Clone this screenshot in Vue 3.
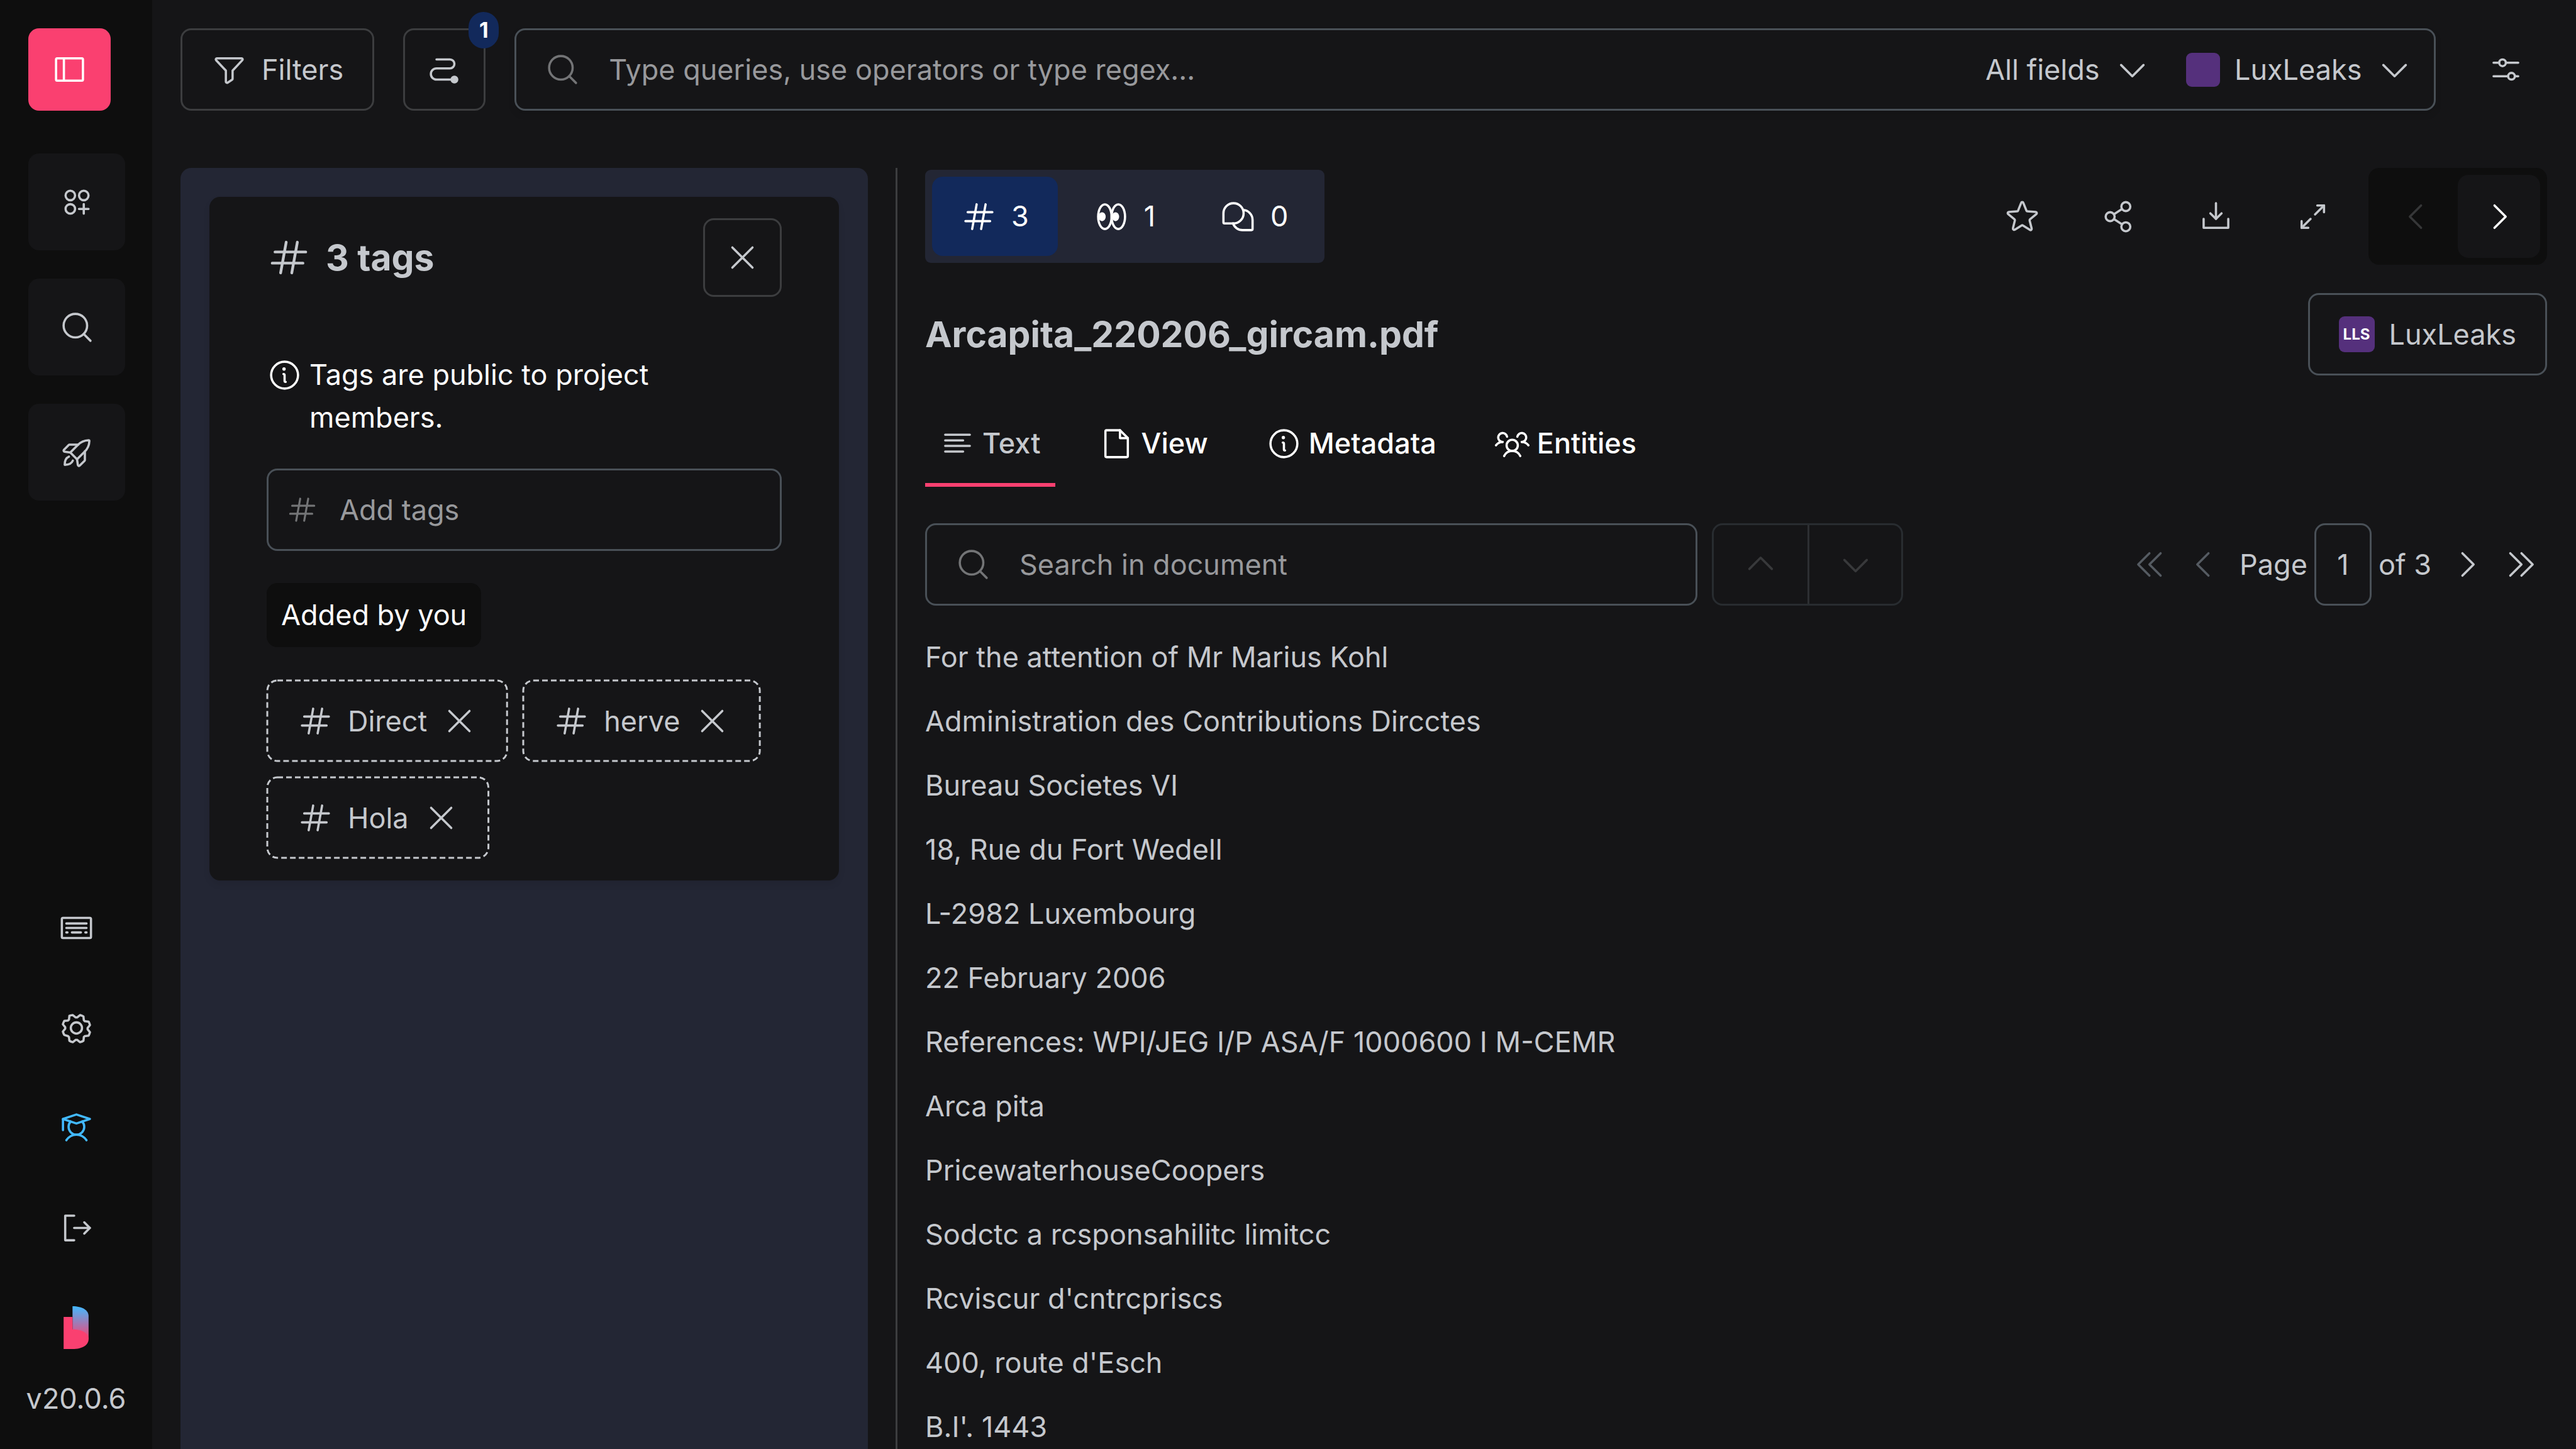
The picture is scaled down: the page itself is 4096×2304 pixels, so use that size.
<script setup>
import { h, ref } from 'vue'

const glyphs = {
  sidebar: ['M40,48H216a8,8,0,0,1,8,8V200a8,8,0,0,1-8,8H40a8,8,0,0,1-8-8V56A8,8,0,0,1,40,48Z', 'M88,48V208'],
  grid: [
    'M46,80a34,34,0,1,0,68,0a34,34,0,1,0-68,0Z',
    'M142,80a34,34,0,1,0,68,0a34,34,0,1,0-68,0Z',
    'M46,176a34,34,0,1,0,68,0a34,34,0,1,0-68,0Z',
    'M176,142V210M142,176H210'
  ],
  search: ['M32,116a84,84,0,1,0,168,0a84,84,0,1,0-168,0Z', 'M175.4,175.4L224,224'],
  rocket: [
    'M128,176,80,128,134,74C156,50,184,41,210,40a6,6,0,0,1,6,6C215,72,206,100,182,122Z',
    'M184,120v61.65a8,8,0,0,1-2.34,5.65l-34.35,34.35a8,8,0,0,1-13.57-4.53L128,176',
    'M136,72H74.35a8,8,0,0,0-5.65,2.34L34.35,108.69a8,8,0,0,0,4.53,13.57L80,128',
    'M98,186C90,206,70,216,40,216C40,186,50,166,70,158'
  ],
  keyboard: [
    'M32,56H224a8,8,0,0,1,8,8V192a8,8,0,0,1-8,8H32a8,8,0,0,1-8-8V64A8,8,0,0,1,32,56Z',
    'M56,96H200M56,128H200M56,160H64M96,160H160M192,160H200'
  ],
  gear: [
    'M88,128a40,40,0,1,0,80,0a40,40,0,1,0-80,0Z',
    'M41.43,178.09A99.14,99.14,0,0,1,31.36,153.8l16.78-21a81.59,81.59,0,0,1,0-9.64l-16.77-21a99.43,99.43,0,0,1,10.05-24.3l26.71-3a81,81,0,0,1,6.81-6.81l3-26.7A99.14,99.14,0,0,1,102.2,36.3l21,16.78a81.59,81.59,0,0,1,9.64,0l21-16.77a99.43,99.43,0,0,1,24.3,10.05l3,26.71a81,81,0,0,1,6.81,6.81l26.7,3a99.14,99.14,0,0,1,10.07,24.29l-16.78,21a81.59,81.59,0,0,1,0,9.64l16.77,21a99.43,99.43,0,0,1-10,24.3l-26.71,3a81,81,0,0,1-6.81,6.81l-3,26.7a99.14,99.14,0,0,1-24.29,10.07l-21-16.78a81.59,81.59,0,0,1-9.64,0l-21,16.77a99.43,99.43,0,0,1-24.3-10l-3-26.71a81,81,0,0,1-6.81-6.81Z'
  ],
  student: [
    'M224,64,128,96,32,64,128,32Z',
    'M32,64V144',
    'M169,82a56,56,0,1,1-82,0',
    'M56,216c15.7-24,41.1-40,72-40s56.3,16,72,40'
  ],
  signOut: ['M112,40H48V216H112', 'M112,128H224', 'M184,88L224,128L184,168'],
  funnel: ['M34.1,61.4A8,8,0,0,1,40,48H216a8,8,0,0,1,5.9,13.4L152,136v58.1a8,8,0,0,1-3.6,6.7l-32,21.3A8,8,0,0,1,104,215.5V136Z'],
  path: ['M72,56h96a32,32,0,0,1,0,64H72a40,40,0,0,0,0,80H176'],
  sliders: [
    'M80,80a24,24,0,1,0,48,0a24,24,0,1,0-48,0Z',
    'M144,176a24,24,0,1,0,48,0a24,24,0,1,0-48,0Z',
    'M40,80H80M128,80H216M40,176H144M192,176H216'
  ],
  hash: ['M48,96H224M176,40L144,216M112,40L80,216M32,160H208'],
  close: ['M200,56L56,200M200,200L56,56'],
  info: ['M32,128a96,96,0,1,0,192,0a96,96,0,1,0-192,0Z', 'M120,120a8,8,0,0,1,8,8v40a8,8,0,0,0,8,8'],
  eyes: [
    'M32,128a48,88,0,1,0,96,0a48,88,0,1,0-96,0Z',
    'M128,128a48,88,0,1,0,96,0a48,88,0,1,0-96,0Z'
  ],
  chats: [
    'M96,32a72,72,0,0,1,0,144H32a8,8,0,0,1-8-8V104A72,72,0,0,1,96,32Z',
    'M163.9,80.1A72,72,0,0,1,232,152v64a8,8,0,0,1-8,8H160a72,72,0,0,1-67.9-48'
  ],
  star: ['M132.4,190.7l50.4,32c6.5,4.1,14.5-2,12.6-9.5l-14.6-57.4a8.7,8.7,0,0,1,2.9-8.8l45.2-37.7c5.9-4.9,2.9-14.8-4.8-15.3l-59-3.8a8.3,8.3,0,0,1-7.3-5.4l-22-55.4a8.3,8.3,0,0,0-15.6,0l-22,55.4A8.3,8.3,0,0,1,91,90.2L32,94c-7.7.5-10.7,10.4-4.8,15.3L72.4,147a8.7,8.7,0,0,1,2.9,8.8L61.8,209.2c-2.3,9,7.3,16.3,15,11.4l46.9-29.9A8.2,8.2,0,0,1,132.4,190.7Z'],
  share: [
    'M32,128a32,32,0,1,0,64,0a32,32,0,1,0-64,0Z',
    'M144,200a32,32,0,1,0,64,0a32,32,0,1,0-64,0Z',
    'M144,56a32,32,0,1,0,64,0a32,32,0,1,0-64,0Z',
    'M90.9,110.7L149.1,73.3M90.9,145.3L149.1,182.7'
  ],
  download: ['M128,32V144', 'M88,104L128,144L168,104', 'M216,144V208H40V144'],
  expand: ['M160,48H208V96', 'M208,48L144,112', 'M96,208H48V160', 'M48,208L112,144'],
  left: ['M160,208L80,128L160,48'],
  right: ['M96,48L176,128L96,208'],
  up: ['M48,160L128,80L208,160'],
  down: ['M208,96L128,176L48,96'],
  first: ['M200,208L120,128L200,48', 'M120,208L40,128L120,48'],
  last: ['M56,48L136,128L56,208', 'M136,48L216,128L136,208'],
  lines: ['M40,64H216M40,104H168M40,144H216M40,184H168'],
  file: ['M200,224H56a8,8,0,0,1-8-8V40a8,8,0,0,1,8-8h96l56,56V216A8,8,0,0,1,200,224Z', 'M152,32V88H208'],
  people: [
    'M88,140a40,40,0,1,0,80,0a40,40,0,1,0-80,0Z',
    'M196,116a59.8,59.8,0,0,1,48,24',
    'M12,140a59.8,59.8,0,0,1,48-24',
    'M70.4,216a64.1,64.1,0,0,1,115.2,0',
    'M60,116A32,32,0,1,1,91.4,78',
    'M164.6,78A32,32,0,1,1,196,116'
  ]
}

const solids = {
  path: ['M172,200a28,28,0,1,0,56,0a28,28,0,1,0-56,0Z'],
  info: ['M112,84a12,12,0,1,0,24,0a12,12,0,1,0-24,0Z'],
  eyes: ['M34,128a26,32,0,1,0,52,0a26,32,0,1,0-52,0Z', 'M130,128a26,32,0,1,0,52,0a26,32,0,1,0-52,0Z']
}

const Icon = ({ name }) =>
  h('svg', { class: 'icon', viewBox: '0 0 256 256', 'aria-hidden': 'true' }, [
    ...glyphs[name].map((d) => h('path', { d })),
    ...(solids[name] || []).map((d) => h('path', { d, fill: 'currentColor', stroke: 'none' }))
  ])
Icon.props = ['name']

const mainNav = [
  { icon: 'grid', label: 'Projects' },
  { icon: 'search', label: 'Search' },
  { icon: 'rocket', label: 'Tasks' }
]
const footNav = [
  { icon: 'keyboard', label: 'Shortcuts' },
  { icon: 'gear', label: 'Settings' },
  { icon: 'student', label: 'Guided tour', accent: true },
  { icon: 'signOut', label: 'Sign out' }
]
const tags = ref(['Direct', 'herve', 'Hola'])
const panels = [
  { icon: 'hash', label: 'Tags', count: 3, active: true },
  { icon: 'eyes', label: 'Recommendations', count: 1 },
  { icon: 'chats', label: 'Comments', count: 0 }
]
const actions = [
  { icon: 'star', label: 'Star' },
  { icon: 'share', label: 'Share' },
  { icon: 'download', label: 'Download' },
  { icon: 'expand', label: 'Expand' }
]
const tabs = [
  { icon: 'lines', label: 'Text', active: true },
  { icon: 'file', label: 'View' },
  { icon: 'info', label: 'Metadata' },
  { icon: 'people', label: 'Entities' }
]
const paragraphs = [
  'For the attention of Mr Marius Kohl',
  'Administration des Contributions Dircctes',
  'Bureau Societes VI',
  '18, Rue du Fort Wedell',
  'L-2982 Luxembourg',
  '22 February 2006',
  'References: WPI/JEG I/P ASA/F 1000600 I M-CEMR',
  'Arca pita',
  'PricewaterhouseCoopers',
  'Sodctc a rcsponsahilitc limitcc',
  "Rcviscur d'cntrcpriscs",
  "400, route d'Esch",
  "B.I'. 1443"
]
const page = ref('1')
</script>

<template>
  <div class="app">
    <aside class="sidebar">
      <button class="toggle" type="button" aria-label="Toggle sidebar"><Icon name="sidebar" /></button>
      <nav class="main-nav">
        <a v-for="item in mainNav" :key="item.icon" href="#" class="nav-card" :aria-label="item.label">
          <Icon :name="item.icon" />
        </a>
      </nav>
      <nav class="foot-nav">
        <a
          v-for="item in footNav"
          :key="item.icon"
          href="#"
          class="foot-link"
          :class="{ accent: item.accent }"
          :aria-label="item.label"
        >
          <Icon :name="item.icon" />
        </a>
      </nav>
      <svg class="logo" viewBox="0 0 56 96" aria-hidden="true">
        <defs>
          <linearGradient id="page-fold" x1="0" y1="0" x2="0" y2="1">
            <stop offset="0" stop-color="#42b9ff" />
            <stop offset="1" stop-color="#fa4070" />
          </linearGradient>
        </defs>
        <path d="M20,0C42,0,56,9,56,22V74H20Z" fill="url(#page-fold)" />
        <path d="M0,24H20V52C42,52,56,61,56,74S42,96,20,96H0Z" fill="#fa4070" />
      </svg>
      <span class="version">v20.0.6</span>
    </aside>

    <div class="main">
      <header class="topbar">
        <button class="btn outlined" type="button"><Icon name="funnel" />Filters</button>
        <button class="btn outlined square" type="button" aria-label="Search breadcrumb, 1 item">
          <Icon name="path" />
          <span class="badge">1</span>
        </button>
        <div class="field search">
          <Icon name="search" class="muted" />
          <input type="text" aria-label="Search" placeholder="Type queries, use operators or type regex..." />
          <div class="pickers">
            <label class="picker">
              <select aria-label="Field">
                <option>All fields</option>
              </select>
              <Icon name="down" />
            </label>
            <label class="picker">
              <span class="swatch"></span>
              <select aria-label="Project">
                <option>LuxLeaks</option>
              </select>
              <Icon name="down" />
            </label>
          </div>
        </div>
        <button class="btn square" type="button" aria-label="Search settings"><Icon name="sliders" /></button>
      </header>

      <div class="content">
        <section class="side-panel">
          <div class="card">
            <div class="card-head">
              <h3><Icon name="hash" class="large" />3 tags</h3>
              <button class="btn outlined close" type="button" aria-label="Close"><Icon name="close" /></button>
            </div>
            <p class="hint"><Icon name="info" /><span>Tags are public to project members.</span></p>
            <div class="field add">
              <Icon name="hash" class="muted small" />
              <input type="text" aria-label="Add tags" placeholder="Add tags" />
            </div>
            <span class="group-label">Added by you</span>
            <ul class="chips">
              <li v-for="tag in tags" :key="tag" class="chip">
                <svg class="chip-outline" aria-hidden="true"><rect x="1" y="1" rx="16" /></svg>
                <Icon name="hash" />
                {{ tag }}
                <button type="button" class="plain" :aria-label="'Remove ' + tag"><Icon name="close" /></button>
              </li>
            </ul>
          </div>
        </section>

        <div class="divider"></div>

        <section class="document">
          <div class="toolbar">
            <div class="switcher">
              <button
                v-for="panel in panels"
                :key="panel.icon"
                type="button"
                class="switch"
                :class="{ active: panel.active }"
                :aria-label="panel.label"
              >
                <Icon :name="panel.icon" />{{ panel.count }}
              </button>
            </div>
            <div class="actions">
              <button v-for="action in actions" :key="action.icon" type="button" class="plain action" :aria-label="action.label">
                <Icon :name="action.icon" />
              </button>
              <div class="pager">
                <button type="button" class="step" disabled aria-label="Previous document"><Icon name="left" /></button>
                <button type="button" class="step next" aria-label="Next document"><Icon name="right" /></button>
              </div>
            </div>
          </div>

          <div class="title-row">
            <h1>Arcapita_220206_gircam.pdf</h1>
            <a href="#" class="btn project"><span class="swatch initials">LLS</span>LuxLeaks</a>
          </div>

          <nav class="tabs">
            <a v-for="tab in tabs" :key="tab.label" href="#" class="tab" :class="{ active: tab.active }">
              <Icon :name="tab.icon" />{{ tab.label }}
            </a>
          </nav>

          <div class="find-row">
            <div class="field find">
              <Icon name="search" class="muted" />
              <input type="text" aria-label="Search in document" placeholder="Search in document" />
            </div>
            <div class="matches">
              <button type="button" disabled aria-label="Previous match"><Icon name="up" /></button>
              <button type="button" disabled aria-label="Next match"><Icon name="down" /></button>
            </div>
            <div class="pagination">
              <button type="button" class="plain" disabled aria-label="First page"><Icon name="first" /></button>
              <button type="button" class="plain" disabled aria-label="Previous page"><Icon name="left" /></button>
              <label class="page-label">
                Page
                <input v-model="page" type="text" class="page-input" />
                of 3
              </label>
              <button type="button" class="plain" aria-label="Next page"><Icon name="right" /></button>
              <button type="button" class="plain" aria-label="Last page"><Icon name="last" /></button>
            </div>
          </div>

          <article class="text">
            <p v-for="line in paragraphs" :key="line">{{ line }}</p>
          </article>
        </section>
      </div>
    </div>
  </div>
</template>

<style>
body {
  background: #151517;
  overflow: hidden;
}
</style>

<style scoped>
.app {
  display: grid;
  grid-template-columns: 242px 1fr;
  height: 100vh;
  overflow: hidden;
  background: #151517;
  color: #c5c8cd;
  font-family: Inter, 'Liberation Sans', sans-serif;
  font-size: 45px;
  line-height: 68px;
}
.app *,
.app {
  box-sizing: border-box;
}
button,
input,
select {
  margin: 0;
  padding: 0;
  border: 0;
  border-radius: 0;
  background: none;
  color: inherit;
  font: inherit;
}
select {
  appearance: none;
}
input {
  min-width: 0;
  outline: 0;
}
input::placeholder {
  color: #98999c;
  opacity: 1;
}
a {
  color: inherit;
  text-decoration: none;
}
h1,
h3,
p,
ul {
  margin: 0;
  padding: 0;
}
h1,
h3 {
  font-size: 57px;
  font-weight: 700;
}
.icon {
  display: block;
  flex: none;
  width: 57px;
  height: 57px;
  fill: none;
  stroke: currentColor;
  stroke-width: 16;
  stroke-linecap: round;
  stroke-linejoin: round;
}
.icon.large {
  width: 71px;
  height: 71px;
}
.icon.small {
  width: 51px;
  height: 51px;
}
.icon.muted {
  color: #737476;
}

.sidebar {
  display: flex;
  flex-direction: column;
  padding: 45px 0 46px;
  background: #0e0e0e;
}
.toggle {
  display: grid;
  place-items: center;
  width: 131px;
  height: 131px;
  margin-left: 45px;
  border-radius: 17px;
  background: #fa4070;
  color: #fff;
}
.main-nav {
  display: flex;
  flex-direction: column;
  gap: 45px;
  margin: 68px 0 auto 45px;
}
.nav-card {
  display: grid;
  place-items: center;
  width: 154px;
  height: 154px;
  border-radius: 17px;
  background: #151517;
}
.foot-nav {
  display: flex;
  flex-direction: column;
  align-items: center;
  gap: 102px;
}
.accent {
  color: #42b9ff;
}
.logo {
  display: block;
  align-self: center;
  width: 40px;
  height: 68px;
  margin: 96px 0 45px;
}
.version {
  align-self: center;
}

.main {
  display: flex;
  flex-direction: column;
  min-width: 0;
  min-height: 0;
  padding: 45px 46px 0 45px;
}
.topbar {
  display: flex;
  gap: 46px;
}
.btn {
  position: relative;
  display: flex;
  align-items: center;
  justify-content: center;
  gap: 23px;
  height: 131px;
  padding: 0 46px;
  border: 3px solid transparent;
  border-radius: 17px;
}
.btn.outlined {
  border-color: #3c3d3f;
}
.btn.square {
  width: 131px;
  padding: 0;
}
.badge {
  position: absolute;
  top: -29px;
  right: -24px;
  display: grid;
  place-items: center;
  width: 48px;
  height: 58px;
  border-radius: 24px;
  background: #12295b;
  color: #fff;
  font-size: 34px;
  font-weight: 700;
  line-height: 34px;
}
.field {
  display: flex;
  align-items: center;
  height: 131px;
  padding: 0 45px;
  gap: 45px;
  border: 3px solid #495057;
  border-radius: 17px;
}
.field input {
  flex: 1;
}
.search {
  flex: 1;
  padding-right: 34px;
  box-shadow: 0 6px 11px rgba(0, 0, 0, 0.1);
}
.pickers {
  display: flex;
  gap: 57px;
}
.picker {
  display: flex;
  align-items: center;
  gap: 23px;
}
.swatch {
  flex: none;
  width: 54px;
  height: 54px;
  border-radius: 9px;
  background: #55307c;
}

.content {
  flex: 1;
  display: grid;
  grid-template-columns: 1093px 3px 1fr;
  gap: 44px;
  min-height: 0;
  margin-top: 91px;
}
.side-panel {
  padding: 46px 46px 0;
  border-radius: 17px 17px 0 0;
  background: #232634;
}
.card {
  padding: 34px 91px;
  border-radius: 17px;
  background: #151517;
  box-shadow: 0 6px 11px rgba(0, 0, 0, 0.08);
}
.card-head {
  display: flex;
  align-items: center;
  justify-content: space-between;
}
.card-head h3 {
  display: flex;
  align-items: center;
  gap: 23px;
}
.btn.close {
  width: 125px;
  height: 125px;
  padding: 0;
}
.hint {
  display: flex;
  gap: 11px;
  margin-top: 90px;
  color: #fff;
}
.hint .icon {
  margin-top: 6px;
}
.add {
  margin-top: 47px;
  padding: 0 28px;
  gap: 34px;
}
.group-label {
  display: inline-block;
  margin-top: 51px;
  padding: 17px 23px;
  border-radius: 17px;
  background: #0e0e0e;
  color: #fff;
}
.chips {
  display: flex;
  flex-wrap: wrap;
  gap: 23px;
  margin-top: 52px;
  list-style: none;
}
.chip {
  position: relative;
  display: flex;
  align-items: center;
  gap: 23px;
  height: 131px;
  padding: 0 49px;
}
.chip-outline {
  position: absolute;
  inset: 0;
  width: 100%;
  height: 100%;
  overflow: visible;
  pointer-events: none;
}
.chip-outline rect {
  width: calc(100% - 3px);
  height: calc(100% - 3px);
  fill: none;
  stroke: currentColor;
  stroke-width: 3;
  stroke-dasharray: 9 5;
}
.divider {
  background: #3c3d3f;
}

.document {
  min-width: 0;
}
.toolbar,
.title-row,
.actions,
.find-row,
.pagination,
.page-label {
  display: flex;
  align-items: center;
}
.toolbar,
.title-row {
  justify-content: space-between;
}
.switcher {
  display: flex;
  gap: 11px;
  padding: 11px;
  border-radius: 9px;
  background: #232634;
  color: #fff;
}
.switch {
  display: flex;
  align-items: center;
  gap: 23px;
  height: 126px;
  padding: 0 46px;
  border-radius: 17px;
}
.switch.active {
  background: #12295b;
}
.action {
  display: grid;
  place-items: center;
  width: 131px;
  height: 131px;
}
.actions {
  gap: 23px;
}
.pager {
  display: flex;
  padding: 11px;
  border-radius: 17px;
  background: #0e0e0e;
}
.step {
  display: grid;
  place-items: center;
  width: 131px;
  height: 132px;
  border-radius: 17px;
  color: #fff;
}
.step:disabled {
  color: #363738;
}
.step.next {
  background: #151517;
}
.title-row {
  margin-top: 45px;
}
.project {
  border-color: #495057;
}
.initials {
  display: grid;
  place-items: center;
  width: 57px;
  height: 57px;
  color: #fff;
  font-size: 24px;
  font-weight: 700;
  line-height: 24px;
}
.tabs {
  display: flex;
  gap: 46px;
  margin-top: 45px;
}
.tab {
  display: flex;
  align-items: center;
  gap: 11px;
  padding: 29px 23px;
  border-bottom: 6px solid transparent;
  color: #fff;
  font-weight: 500;
}
.tab.active {
  border-color: #fa4070;
  color: #c5c8cd;
}
.find-row {
  margin-top: 58px;
}
.find {
  width: 1228px;
}
.matches {
  display: flex;
  margin-left: 23px;
  border: 3px solid #282c30;
  border-radius: 17px;
}
.matches button {
  display: grid;
  place-items: center;
  width: 149px;
  height: 125px;
  color: #38393b;
}
.matches button + button {
  border-left: 3px solid #2d2f32;
}
.pagination {
  gap: 28px;
  margin-left: auto;
  padding-right: 14px;
}
.pagination button:disabled {
  color: #555b62;
}
.page-label {
  gap: 11px;
}
.page-input {
  width: 91px;
  height: 131px;
  border: 3px solid #495057;
  border-radius: 17px;
  text-align: center;
}
.text {
  margin-top: 48px;
}
.text p {
  margin-bottom: 34px;
}
</style>
